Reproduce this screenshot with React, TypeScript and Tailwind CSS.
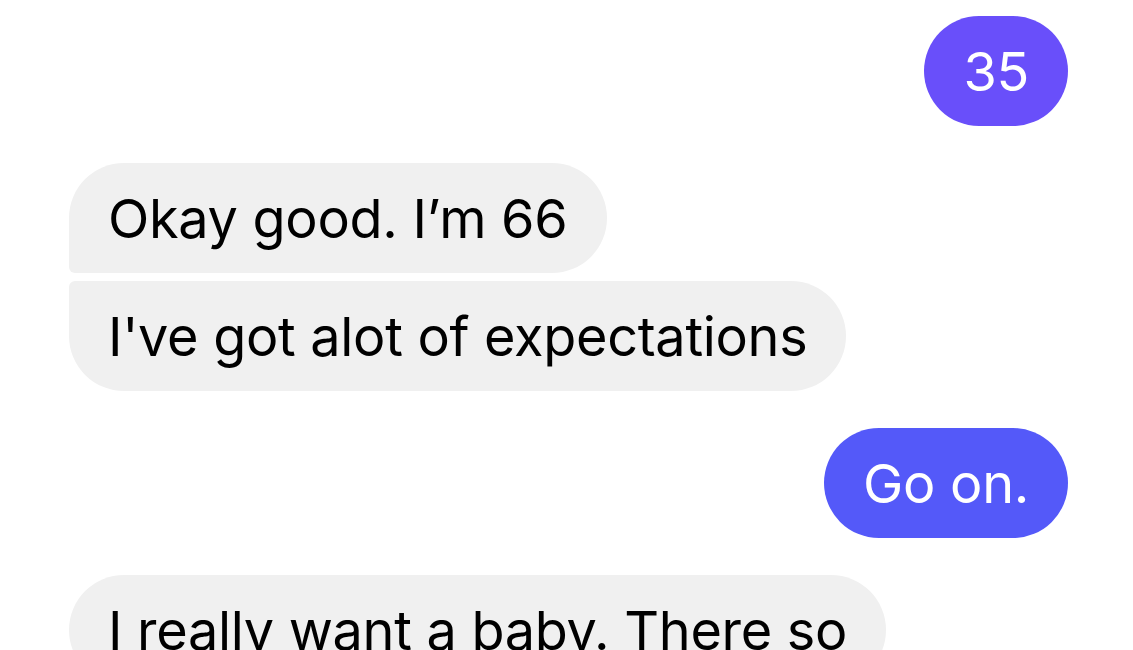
type Msg = { id: number; text: string; mine: boolean; shape: string; tone?: string };

const messages: Msg[] = [
  { id: 1, text: "35", mine: true, shape: "rounded-[55px]", tone: "bg-[#694ffa]" },
  { id: 2, text: "Okay good. I\u2019m 66", mine: false, shape: "rounded-[55px] rounded-bl-[6px]" },
  { id: 3, text: "I've got alot of expectations", mine: false, shape: "rounded-[55px] rounded-tl-[6px]" },
  { id: 4, text: "Go on.", mine: true, shape: "rounded-[55px]", tone: "bg-[#5459f9]" },
  { id: 5, text: "I really want a baby. There so", mine: false, shape: "rounded-[55px]" },
];

function Bubble({ msg }: { msg: Msg }) {
  const color = msg.mine ? `${msg.tone} text-white` : "bg-[#f0f0f0] text-black";
  return (
    <div className={`flex ${msg.mine ? "justify-end" : "justify-start"}`}>
      <div className={`h-[110px] shrink-0 flex items-center px-[39px] whitespace-nowrap text-[54px] tracking-[-0.3px] ${color} ${msg.shape}`}>
        {msg.text}
      </div>
    </div>
  );
}

export default function App() {
  const [a, b, c, d, e] = messages;
  return (
    <div className="w-[1133px] h-[650px] overflow-hidden bg-white font-['Inter','Liberation_Sans',sans-serif]">
      <div className="pl-[69px] pr-[65px] pt-[16px] flex flex-col gap-[37px]">
        <Bubble msg={a} />
        <div className="flex flex-col gap-[8px]">
          <Bubble msg={b} />
          <Bubble msg={c} />
        </div>
        <Bubble msg={d} />
        <Bubble msg={e} />
      </div>
    </div>
  );
}
